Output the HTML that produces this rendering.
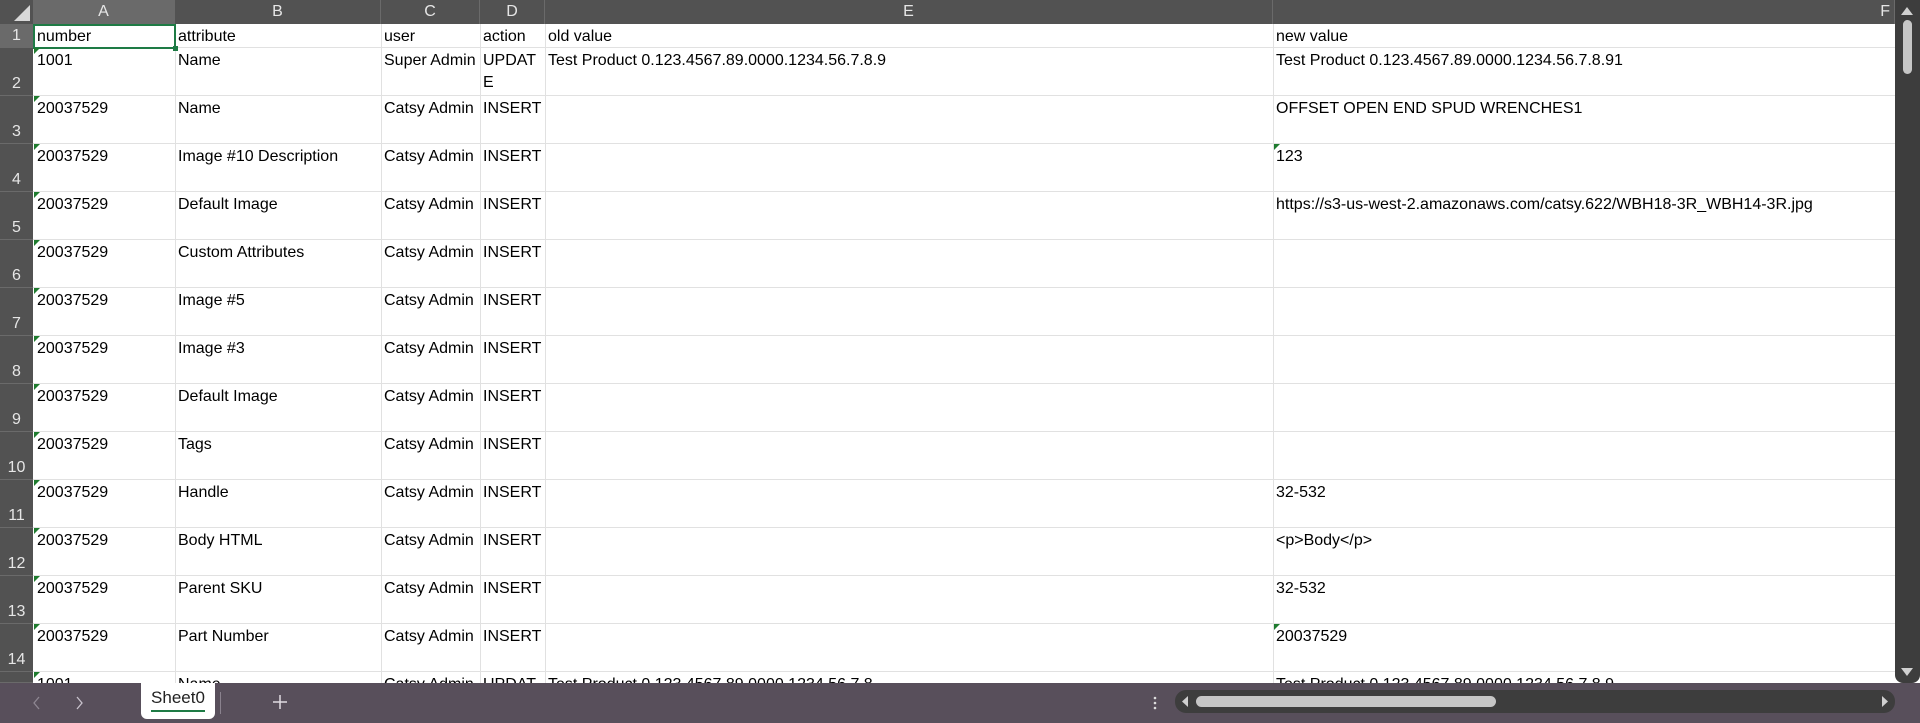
<!DOCTYPE html>
<html><head><style>
*{margin:0;padding:0;box-sizing:border-box}
body{width:1920px;height:723px;overflow:hidden;background:#fff;font-family:"Liberation Sans",sans-serif;font-size:16px;color:#000;position:relative}
.a{position:absolute}
.ch{top:0;height:24px;background:#525252;color:#e6e6e6;text-align:center;line-height:24px;font-size:16px;border-right:1px solid #6a6a6a}
.rh{left:0;width:33px;background:#525252;color:#e6e6e6;text-align:center;font-size:16px;border-bottom:1px solid #6a6a6a;display:flex;align-items:flex-end;justify-content:center;padding-bottom:2px}
.vl{top:24px;width:1px;height:659px;background:#e1e1e1}
.hl{left:33px;width:1862px;height:1px;background:#e1e1e1}
.t{white-space:nowrap;line-height:21px}
.tri{width:0;height:0;border-top:6px solid #1e7b2e;border-right:6px solid transparent}
</style></head><body>
<div class="a" style="left:0;top:0;width:33px;height:24px;background:#525252"></div>
<svg class="a" style="left:14px;top:5px" width="16" height="16"><polygon points="16,0 16,16 0,16" fill="#d8d8d8"/></svg>
<div class="a ch" style="left:33px;width:142px;background:#6a6a6a">A</div>
<div class="a ch" style="left:175px;width:206px">B</div>
<div class="a ch" style="left:381px;width:99px">C</div>
<div class="a ch" style="left:480px;width:65px">D</div>
<div class="a ch" style="left:545px;width:728px">E</div>
<div class="a ch" style="left:1273px;width:622px;text-align:right;padding-right:4px">F</div>
<div class="a rh" style="top:24px;height:24px;background:#6a6a6a;align-items:center;padding:0">1</div>
<div class="a rh" style="top:48px;height:48px">2</div>
<div class="a rh" style="top:96px;height:48px">3</div>
<div class="a rh" style="top:144px;height:48px">4</div>
<div class="a rh" style="top:192px;height:48px">5</div>
<div class="a rh" style="top:240px;height:48px">6</div>
<div class="a rh" style="top:288px;height:48px">7</div>
<div class="a rh" style="top:336px;height:48px">8</div>
<div class="a rh" style="top:384px;height:48px">9</div>
<div class="a rh" style="top:432px;height:48px">10</div>
<div class="a rh" style="top:480px;height:48px">11</div>
<div class="a rh" style="top:528px;height:48px">12</div>
<div class="a rh" style="top:576px;height:48px">13</div>
<div class="a rh" style="top:624px;height:48px">14</div>
<div class="a rh" style="top:672px;height:11px"></div>
<div class="a vl" style="left:175px"></div><div class="a vl" style="left:381px"></div><div class="a vl" style="left:480px"></div><div class="a vl" style="left:545px"></div><div class="a vl" style="left:1273px"></div>
<div class="a hl" style="top:47px"></div><div class="a hl" style="top:95px"></div><div class="a hl" style="top:143px"></div><div class="a hl" style="top:191px"></div><div class="a hl" style="top:239px"></div><div class="a hl" style="top:287px"></div><div class="a hl" style="top:335px"></div><div class="a hl" style="top:383px"></div><div class="a hl" style="top:431px"></div><div class="a hl" style="top:479px"></div><div class="a hl" style="top:527px"></div><div class="a hl" style="top:575px"></div><div class="a hl" style="top:623px"></div><div class="a hl" style="top:671px"></div>
<div class="a" style="left:33px;top:24px;width:143px;height:25px;border:2px solid #1e7b45"></div>
<div class="a" style="left:173px;top:46px;width:5px;height:5px;background:#1e7b45"></div>
<div class="a t" style="left:37px;top:26px">number</div>
<div class="a t" style="left:178px;top:26px">attribute</div>
<div class="a t" style="left:384px;top:26px">user</div>
<div class="a t" style="left:483px;top:26px">action</div>
<div class="a t" style="left:548px;top:26px">old value</div>
<div class="a t" style="left:1276px;top:26px">new value</div>
<div class="a t" style="left:37px;top:50px">1001</div>
<div class="a t" style="left:178px;top:50px">Name</div>
<div class="a t" style="left:384px;top:50px">Super Admin</div>
<div class="a t" style="left:483px;top:50px;line-height:22px">UPDAT<br>E</div>
<div class="a t" style="left:548px;top:50px">Test Product 0.123.4567.89.0000.1234.56.7.8.9</div>
<div class="a t" style="left:1276px;top:50px">Test Product 0.123.4567.89.0000.1234.56.7.8.91</div>
<div id="rows"></div>
<script>
var d=[["Name","OFFSET OPEN END SPUD WRENCHES1"],["Image #10 Description","123"],["Default Image","https://s3-us-west-2.amazonaws.com/catsy.622/WBH18-3R_WBH14-3R.jpg"],["Custom Attributes",""],["Image #5",""],["Image #3",""],["Default Image",""],["Tags",""],["Handle","32-532"],["Body HTML","<p>Body</p>"],["Parent SKU","32-532"],["Part Number","20037529"]];
var h="";
for(var i=0;i<d.length;i++){var y=96+i*48;
h+='<div class="a t" style="left:37px;top:'+(y+2)+'px">20037529</div><div class="a t" style="left:178px;top:'+(y+2)+'px">'+d[i][0]+'</div><div class="a t" style="left:384px;top:'+(y+2)+'px">Catsy Admin</div><div class="a t" style="left:483px;top:'+(y+2)+'px">INSERT</div>';
var e=document.createElement('div');e.textContent=d[i][1];
h+='<div class="a t" style="left:1276px;top:'+(y+2)+'px">'+e.innerHTML+'</div>';
h+='<div class="a tri" style="left:34px;top:'+y+'px"></div>';
if(i==1||i==11)h+='<div class="a tri" style="left:1274px;top:'+y+'px"></div>';}
h+='<div class="a tri" style="left:34px;top:48px"></div><div class="a tri" style="left:34px;top:672px"></div>';
h+='<div class="a t" style="left:37px;top:674px">1001</div><div class="a t" style="left:178px;top:674px">Name</div><div class="a t" style="left:384px;top:674px">Catsy Admin</div><div class="a t" style="left:483px;top:674px">UPDAT</div><div class="a t" style="left:548px;top:674px">Test Product 0.123.4567.89.0000.1234.56.7.8</div><div class="a t" style="left:1276px;top:674px">Test Product 0.123.4567.89.0000.1234.56.7.8.9</div>';
document.getElementById('rows').innerHTML=h;
</script>
<div class="a" style="left:1895px;top:0;width:25px;height:683px;background:#3d3d3d;border-radius:0 0 8px 8px"></div>
<svg class="a" style="left:1900px;top:6px" width="14" height="10"><polygon points="7,1 13,9 1,9" fill="#d0d0d0"/></svg>
<div class="a" style="left:1903px;top:20px;width:9px;height:54px;background:#c6c6c6;border-radius:5px"></div>
<svg class="a" style="left:1900px;top:667px" width="14" height="10"><polygon points="1,1 13,1 7,9" fill="#d0d0d0"/></svg>
<div class="a" style="left:0;top:683px;width:1920px;height:40px;background:#584f5b"></div>
<svg class="a" style="left:30px;top:693px" width="60" height="20"><path d="M9 4 L4 10 L9 16" stroke="#8e8792" stroke-width="1.3" fill="none"/><path d="M47 4 L52 10 L47 16" stroke="#c8c2cc" stroke-width="1.3" fill="none"/></svg>
<div class="a" style="left:141px;top:683px;width:74px;height:36px;background:#fff;border-radius:0 0 6px 6px;text-align:center;font-size:17px;line-height:30px;color:#222">Sheet0</div>
<div class="a" style="left:151px;top:710px;width:54px;height:2px;background:#1e7b45"></div>
<div class="a" style="left:220px;top:692px;width:1px;height:22px;background:#8a828e"></div>
<svg class="a" style="left:272px;top:694px" width="16" height="16"><path d="M8 1V15M1 8H15" stroke="#e0dce2" stroke-width="1.5"/></svg>
<svg class="a" style="left:1152px;top:695px" width="6" height="16"><circle cx="3" cy="3" r="1.3" fill="#ddd"/><circle cx="3" cy="8" r="1.3" fill="#ddd"/><circle cx="3" cy="13" r="1.3" fill="#ddd"/></svg>
<div class="a" style="left:1175px;top:690px;width:720px;height:23px;background:#3d3d3d;border-radius:11px"></div>
<svg class="a" style="left:1180px;top:695px" width="10" height="13"><polygon points="8,1 8,12 2,6.5" fill="#d0d0d0"/></svg>
<div class="a" style="left:1196px;top:696px;width:300px;height:11px;background:#c6c6c6;border-radius:6px"></div>
<svg class="a" style="left:1880px;top:695px" width="10" height="13"><polygon points="2,1 2,12 8,6.5" fill="#d0d0d0"/></svg>
</body></html>
